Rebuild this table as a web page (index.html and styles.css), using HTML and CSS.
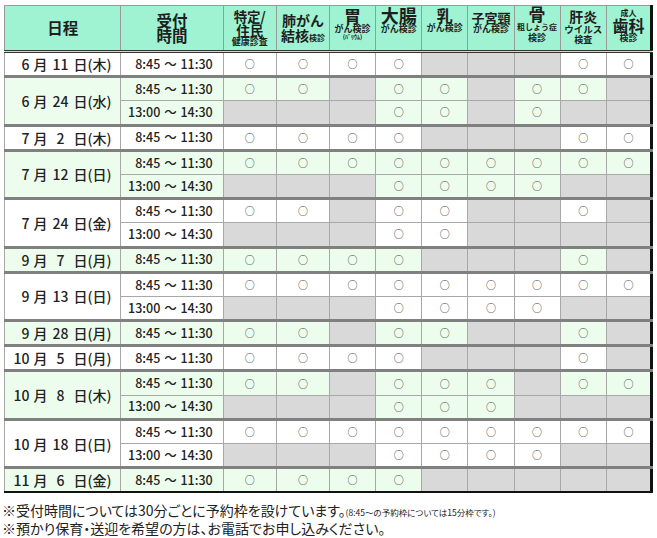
FILE: index.html
```html
<!DOCTYPE html>
<html lang="ja">
<head>
<meta charset="utf-8">
<title>検診日程</title>
<link rel="stylesheet" href="styles.css">
</head>
<body>
<div class="page">
<table class="sched">
  <colgroup>
    <col class="c-date"><col class="c-time"><col class="c-w"><col class="c-w"><col class="c-n"><col class="c-n"><col class="c-n"><col class="c-n"><col class="c-n"><col class="c-n"><col class="c-l">
  </colgroup>
  <thead>
    <tr>
      <th class="mid"><span class="t-date">日程</span></th>
      <th class="mid"><span class="t-time blk">受付</span><span class="t-time blk">時間</span></th>
      <th class="pt4"><span class="t13 blk">特定/</span><span class="t13 blk">住民</span><span class="t9 blk">健康診査</span></th>
      <th class="mid"><span class="t14 blk">肺がん</span><span class="t14 blk">結核<span class="t8">検診</span></span></th>
      <th class="pt1"><span class="t17 blk">胃</span><span class="t9 blk">がん検診</span><span class="t6 blk">(ﾊﾞﾘｳﾑ)</span></th>
      <th class="pt1"><span class="t18 blk">大腸</span><span class="t9 blk">がん検診</span></th>
      <th class="pt1"><span class="t16 blk">乳</span><span class="t9 blk">がん検診</span></th>
      <th class="pt5"><span class="t13b blk">子宮頸</span><span class="t9 blk">がん検診</span></th>
      <th class="pt0"><span class="t17b blk">骨</span><span class="t8b blk">粗しょう症</span><span class="t9b blk">検診</span></th>
      <th class="pt3"><span class="t14 blk">肝炎</span><span class="t95 blk">ウイルス</span><span class="t9b blk">検査</span></th>
      <th class="pt2"><span class="t8b blk">成人</span><span class="t16b blk">歯科</span><span class="t9c blk">検診</span></th>
    </tr>
  </thead>
  <tbody>
    <tr><td class="date"><span class="m">6</span>月<span class="d">11</span>日(木)</td><td class="time">8:45 ～ 11:30</td><td class="o">○</td><td class="o">○</td><td class="o">○</td><td class="o">○</td><td class="x"></td><td class="x"></td><td class="x"></td><td class="o">○</td><td class="o">○</td></tr>
  </tbody>
  <tbody class="gr">
    <tr><td class="date" rowspan="2"><span class="m">6</span>月<span class="d">24</span>日(水)</td><td class="time">8:45 ～ 11:30</td><td class="o">○</td><td class="o">○</td><td class="x"></td><td class="o">○</td><td class="o">○</td><td class="x"></td><td class="o">○</td><td class="o">○</td><td class="x"></td></tr>
    <tr><td class="time">13:00 ～ 14:30</td><td class="x"></td><td class="x"></td><td class="x"></td><td class="o">○</td><td class="o">○</td><td class="x"></td><td class="o">○</td><td class="x"></td><td class="x"></td></tr>
  </tbody>
  <tbody>
    <tr><td class="date"><span class="m">7</span>月<span class="d">2</span>日(木)</td><td class="time">8:45 ～ 11:30</td><td class="o">○</td><td class="o">○</td><td class="o">○</td><td class="o">○</td><td class="x"></td><td class="x"></td><td class="x"></td><td class="o">○</td><td class="o">○</td></tr>
  </tbody>
  <tbody class="gr">
    <tr><td class="date" rowspan="2"><span class="m">7</span>月<span class="d">12</span>日(日)</td><td class="time">8:45 ～ 11:30</td><td class="o">○</td><td class="o">○</td><td class="o">○</td><td class="o">○</td><td class="o">○</td><td class="o">○</td><td class="o">○</td><td class="o">○</td><td class="o">○</td></tr>
    <tr><td class="time">13:00 ～ 14:30</td><td class="x"></td><td class="x"></td><td class="x"></td><td class="o">○</td><td class="o">○</td><td class="o">○</td><td class="o">○</td><td class="x"></td><td class="x"></td></tr>
  </tbody>
  <tbody>
    <tr><td class="date" rowspan="2"><span class="m">7</span>月<span class="d">24</span>日(金)</td><td class="time">8:45 ～ 11:30</td><td class="o">○</td><td class="o">○</td><td class="x"></td><td class="o">○</td><td class="o">○</td><td class="x"></td><td class="x"></td><td class="o">○</td><td class="x"></td></tr>
    <tr><td class="time">13:00 ～ 14:30</td><td class="x"></td><td class="x"></td><td class="x"></td><td class="o">○</td><td class="o">○</td><td class="x"></td><td class="x"></td><td class="x"></td><td class="x"></td></tr>
  </tbody>
  <tbody class="gr">
    <tr><td class="date"><span class="m">9</span>月<span class="d">7</span>日(月)</td><td class="time">8:45 ～ 11:30</td><td class="o">○</td><td class="o">○</td><td class="o">○</td><td class="o">○</td><td class="x"></td><td class="x"></td><td class="x"></td><td class="o">○</td><td class="x"></td></tr>
  </tbody>
  <tbody>
    <tr><td class="date" rowspan="2"><span class="m">9</span>月<span class="d">13</span>日(日)</td><td class="time">8:45 ～ 11:30</td><td class="o">○</td><td class="o">○</td><td class="o">○</td><td class="o">○</td><td class="o">○</td><td class="o">○</td><td class="o">○</td><td class="o">○</td><td class="o">○</td></tr>
    <tr><td class="time">13:00 ～ 14:30</td><td class="x"></td><td class="x"></td><td class="x"></td><td class="o">○</td><td class="o">○</td><td class="o">○</td><td class="o">○</td><td class="x"></td><td class="x"></td></tr>
  </tbody>
  <tbody class="gr">
    <tr><td class="date"><span class="m">9</span>月<span class="d">28</span>日(月)</td><td class="time">8:45 ～ 11:30</td><td class="o">○</td><td class="o">○</td><td class="x"></td><td class="o">○</td><td class="o">○</td><td class="x"></td><td class="x"></td><td class="o">○</td><td class="x"></td></tr>
  </tbody>
  <tbody>
    <tr><td class="date"><span class="m">10</span>月<span class="d">5</span>日(月)</td><td class="time">8:45 ～ 11:30</td><td class="o">○</td><td class="o">○</td><td class="o">○</td><td class="o">○</td><td class="x"></td><td class="x"></td><td class="x"></td><td class="o">○</td><td class="x"></td></tr>
  </tbody>
  <tbody class="gr">
    <tr><td class="date" rowspan="2"><span class="m">10</span>月<span class="d">8</span>日(木)</td><td class="time">8:45 ～ 11:30</td><td class="o">○</td><td class="o">○</td><td class="x"></td><td class="o">○</td><td class="o">○</td><td class="o">○</td><td class="x"></td><td class="o">○</td><td class="o">○</td></tr>
    <tr><td class="time">13:00 ～ 14:30</td><td class="x"></td><td class="x"></td><td class="x"></td><td class="o">○</td><td class="o">○</td><td class="o">○</td><td class="x"></td><td class="x"></td><td class="x"></td></tr>
  </tbody>
  <tbody>
    <tr><td class="date" rowspan="2"><span class="m">10</span>月<span class="d">18</span>日(日)</td><td class="time">8:45 ～ 11:30</td><td class="o">○</td><td class="o">○</td><td class="o">○</td><td class="o">○</td><td class="o">○</td><td class="o">○</td><td class="o">○</td><td class="o">○</td><td class="o">○</td></tr>
    <tr><td class="time">13:00 ～ 14:30</td><td class="x"></td><td class="x"></td><td class="x"></td><td class="o">○</td><td class="o">○</td><td class="o">○</td><td class="o">○</td><td class="x"></td><td class="x"></td></tr>
  </tbody>
  <tbody class="gr">
    <tr><td class="date"><span class="m">11</span>月<span class="d">6</span>日(金)</td><td class="time">8:45 ～ 11:30</td><td class="o">○</td><td class="o">○</td><td class="o">○</td><td class="o">○</td><td class="x"></td><td class="x"></td><td class="x"></td><td class="x"></td><td class="x"></td></tr>
  </tbody>
</table>
<div class="notes">
  <p>※受付時間については30分ごとに予約枠を設けています。<span class="small">(8:45～の予約枠については15分枠です。)</span></p>
  <p>※預かり保育・送迎を希望の方は、お電話でお申し込みください。</p>
</div>
</div>
</body>
</html>
```
FILE: styles.css
```css
html, body {
  margin: 0;
  padding: 0;
  background: #ffffff;
}
body {
  font-family: "Noto Sans CJK JP", "Noto Sans", sans-serif;
  color: #222222;
}
.page {
  padding: 5px 0 0 4px;
}
.sched {
  border-collapse: collapse;
  table-layout: fixed;
  width: 649px;
  border-top: 1px solid #a0a0a0;
  border-left: 1px solid #a0a0a0;
  border-right: 3px solid #111111;
  border-bottom: 2px solid #111111;
}
.c-date { width: 116px; }
.c-time { width: 102px; }
.c-w { width: 53px; }
.c-n { width: 46px; }
.c-l { width: 45px; }

.sched th {
  background: #a0f3d2;
  border: 1px solid #9a9a9a;
  border-bottom: 3px double #333333;
  height: 44px;
  padding: 0;
  text-align: center;
  vertical-align: top;
  font-weight: 700;
  color: #1e1e1e;
  line-height: 1.1;
  white-space: nowrap;
}
.sched th.mid { vertical-align: middle; }
.sched th.pt1 > :first-child { margin-top: 1px; }
.sched th.pt2 > :first-child { margin-top: 2px; }
.sched th.pt3 > :first-child { margin-top: 3px; }
.sched th.pt4 > :first-child { margin-top: 4px; }
.sched th.pt5 > :first-child { margin-top: 5px; }

.blk { display: block; }
.t-date { font-size: 15.5px; line-height: 17px; }
.t-time { font-size: 15.5px; line-height: 15px; }
.t6   { font-size: 6px; line-height: 6px; }
.t8   { font-size: 8px; line-height: 10px; }
.t8b  { font-size: 8px; line-height: 10px; }
.t9   { font-size: 9px; line-height: 9.5px; }
.t9b  { font-size: 9px; line-height: 11px; }
.t9c  { font-size: 9px; line-height: 12px; }
.t95  { font-size: 9.5px; line-height: 10px; }
.t13  { font-size: 13.5px; line-height: 13.5px; }
.t13b { font-size: 13px; line-height: 13px; }
.t14  { font-size: 14px; line-height: 14.5px; }
.t16  { font-size: 16px; line-height: 16px; }
.t16b { font-size: 16px; line-height: 14px; }
.t17  { font-size: 17px; line-height: 17px; }
.t17b { font-size: 17px; line-height: 16px; }
.t18  { font-size: 18px; line-height: 17px; }

.sched tbody {
  border-top: 3px solid #808080;
}
.sched td {
  border: 1px solid #a8a8a8;
  height: 22.2px;
  padding: 0;
  text-align: center;
  vertical-align: middle;
  line-height: 1;
}
.sched tbody.gr td {
  background: #edfded;
}
.sched td.x,
.sched tbody.gr td.x {
  background: #d9d9d9;
}
.sched td.o {
  font-size: 10px;
  color: #333333;
}
.sched td.date {
  text-align: left;
  padding-left: 5.5px;
  font-size: 14px;
  font-weight: 500;
  white-space: nowrap;
}
.m {
  display: inline-block;
  width: 19px;
  text-align: right;
  margin-right: 4px;
}
.d {
  display: inline-block;
  width: 26px;
  text-align: center;
}
.sched td.time {
  text-align: right;
  padding-right: 10px;
  font-size: 12.5px;
  font-weight: 500;
  word-spacing: 1px;
  white-space: nowrap;
}

.notes {
  margin: 9px 0 0 -2px;
  font-size: 14px;
  line-height: 16px;
  color: #222222;
  font-feature-settings: "palt";
}
.notes p {
  margin: 0;
}
.notes .small {
  font-size: 8.5px;
}
```
